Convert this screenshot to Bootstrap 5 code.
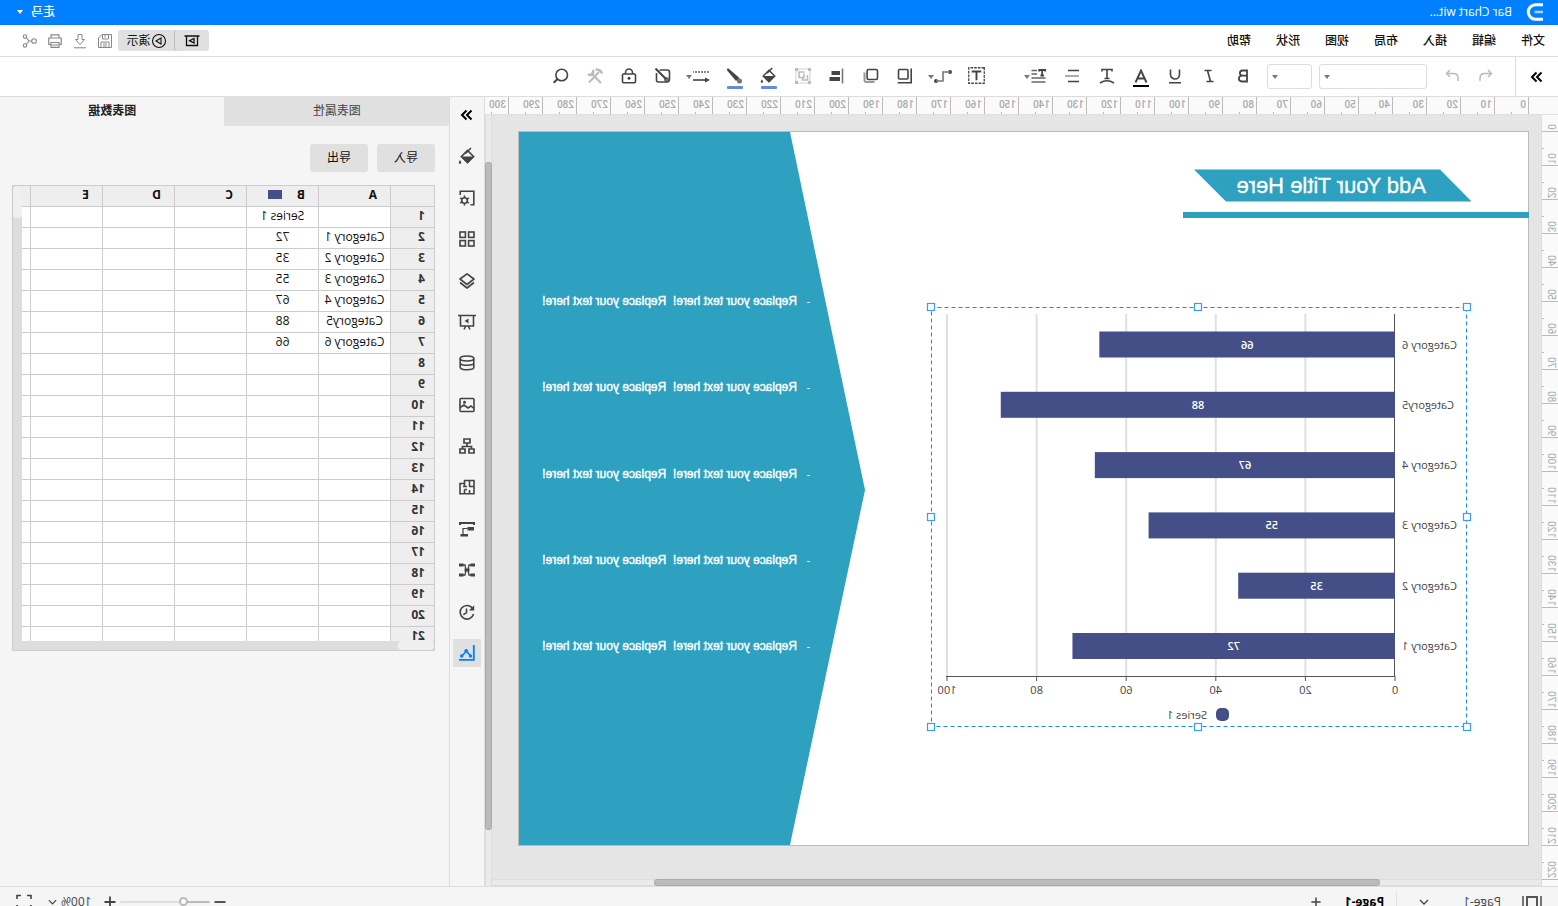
<!DOCTYPE html>
<html lang="zh-CN">
<head>
<meta charset="utf-8">
<meta name="viewport" content="width=device-width, initial-scale=1">
<title>Bar Chart with Text</title>
<link href="https://cdn.jsdelivr.net/npm/bootstrap@5.3.0/dist/css/bootstrap.min.css" rel="stylesheet">
<style>
body{font-family:"Open Sans","Noto Sans CJK SC",sans-serif;font-size:12px;line-height:18px;color:#222;overflow:hidden}
/* whole interface is flipped left to right */
.app-flip{transform:scaleX(-1);height:100vh;background:#fff}
svg{display:block;fill:none;stroke:currentColor;stroke-width:1.6}
.f{fill:currentColor;stroke:none}
.app-flip .btn{--bs-btn-font-size:12px;--bs-btn-line-height:18px;--bs-btn-color:#444;--bs-btn-padding-x:0;--bs-btn-padding-y:0;--bs-btn-border-width:0;--bs-btn-border-radius:3px;display:flex;align-items:center;justify-content:center;flex:none}
.titlebar{height:25px;background:#0080ff;color:#fff;padding:0 17px 1px 14px}
.titlebar .gap-logo{gap:14px}
.menubar{height:32px;border-bottom:1px solid #ddd;padding:0 18px 0 13px}
.menubar nav{gap:25px}
.menubar nav a{color:#111;font-weight:500}
.present{background:#e0e0e0;border-radius:3px;height:21px}
.app-flip .present .btn{--bs-btn-color:#111;height:21px;width:57px}
.app-flip .present .split{width:34px;box-shadow:1px 0 #bbb}
.quick .btn{width:25px;--bs-btn-color:#888}
.toolbar{height:40px;border-bottom:1px solid #ddd}
.fold{width:43px;border-right:1px solid #ddd}
.toolbar .tool{width:34px;height:38px;position:relative;padding-bottom:2px}
.toolbar .faded,.strip .faded{color:#bbb}
.tool .tri{position:absolute;left:26px;top:17px}
.tri{width:0;height:0;border:3px solid transparent;border-top:4px solid #777;border-bottom:0}
.app-flip .form-select{height:25px;padding:0 14px 0 6px;font-size:12px;border:1px solid #ddd;border-radius:3px;background:#fff url("data:image/svg+xml,%3Csvg xmlns='http://www.w3.org/2000/svg' width='6' height='4'%3E%3Cpath d='M0 0h6L3 4z' fill='%23777'/%3E%3C/svg%3E") no-repeat right 4px center/6px 4px}
.ink:after{content:"";position:absolute;left:9px;right:9px;top:28px;height:3px;border-radius:1px;background:#628cd4}
.board{background:#e5e5e5}
.rule-h{height:18px;padding-left:29px;background:#fafafa;border-bottom:1px solid #e0e0e0;color:#aaa;font:500 10px/15px Roboto,sans-serif;overflow:hidden}
.rule-h span{flex:none;width:34px;border-left:1px solid #bbb;padding-left:2px;background:linear-gradient(#bbb,#bbb) 16px 100%/1px 2px no-repeat}
.rule-v{width:17px;background:#fafafa;border-right:1px solid #ddd;color:#aaa;font:10px/12px Roboto,sans-serif;overflow:hidden}
.rule-v span{flex:none;height:34px;border-bottom:1px solid #bbb;background:linear-gradient(#bbb,#bbb) 100% 16px/2px 1px no-repeat;display:flex;align-items:end;padding:0 0 1px 1px}
.rule-v span:first-child{height:17px;background:none}
.rule-v i{font-style:normal;writing-mode:vertical-rl;transform:rotate(180deg)}
.sheet-space{padding:16px 0 0 12px;overflow:hidden}
.track-v{width:7px;background:#eaeaea;border:1px solid #ddd;border-width:0 1px;padding-top:47px}
.track-v div{height:668px;margin:0 -1px;background:#bbb;border:1px solid #aaa;border-radius:3px}
.track-h{height:7px;background:#eaeaea;border:1px solid #ddd;border-width:1px 0;padding-left:161px}
.track-h div{width:726px;height:7px;margin-top:-1px;background:#bbb;border:1px solid #aaa;border-radius:3px}
.strip{width:36px;background:#f5f5f5;border:1px solid #ddd;border-width:0 1px}
.strip-in{height:566px;margin-top:4px}
.strip .btn{width:28px;height:28px;border-radius:0}
.app-flip .strip .on{background:#e0e0e0;color:#0080ff}
.side{width:449px;background:#f5f5f5}
.side .tabs .btn{height:29px;flex:1 1 0;background:#e0e0e0;border-radius:0 0 0 3px;padding-bottom:2px}
.app-flip .side .tabs .on{background:#f5f5f5;font-weight:700;color:#222}
.actions{gap:9px;padding:18px 14px 0}
.side .act{width:58px;height:28px;background:#e0e0e0;color:#111}
.gridbox{margin:13px 12px 0 14px;height:466px;border:1px solid #ccc;background:#ddd;display:grid;grid-template:1fr 9px/1fr 9px;overflow:hidden}
.gridview{background:#fff;overflow:hidden;min-height:0;height:455px}
.gridview table{width:476px;table-layout:fixed;border-collapse:collapse;margin:-1px 0 0 -1px}
.gridview th,.gridview td{border:1px solid #ccc;height:21px;padding:0 0 2px;line-height:18px;text-align:center;overflow:hidden;white-space:nowrap;color:#111}
.gridview th{background:#eee;text-align:left;padding-left:13px;font-weight:700}
.gridview tbody th{padding-left:9px;color:#333}
.gridview th b{display:inline-block;width:14px;height:9px;background:#444f88;margin-left:15px}
.knob-v{height:32px;background:#f0f0f0;border-radius:4px}
.knob-h{width:36px;background:#f0f0f0;border-radius:4px}
.statusbar{height:20px;overflow:hidden;background:#f5f5f5;border-top:1px solid #ddd;color:#555}
.status-in{height:30px}
.app-flip .form-range{width:90px;height:12px}
.form-range::-webkit-slider-runnable-track{height:2px;background:linear-gradient(90deg,#bbb 28%,#ddd 28%)}
.form-range::-webkit-slider-thumb{width:9px;height:9px;margin-top:-4px;background:#fff;border:2px solid #bbb}
.slide text{stroke:none;fill:#444;font-size:11px}
.slide .big{font:22px "Liberation Sans",sans-serif;fill:#fff;stroke:#fff;stroke-width:.3}
.slide .line{font:12px "Liberation Sans",sans-serif;fill:#fff;stroke:#fff;stroke-width:.4;white-space:pre}
.slide .dash{font:10px "Liberation Sans",sans-serif;fill:#fff}
.slide .val{fill:#fff;font-weight:600}
</style>
</head>
<body>
<svg class="d-none">
<symbol id="logo" viewBox="0 0 18 18"><path d="M1 1.800h7.500a7.200 7.200 0 0 1 0 14.400H1" stroke-width="3"/><path d="M1 9h8.500" stroke-width="2.600" opacity=".65"/></symbol>
<symbol id="dbl" viewBox="0 0 16 16"><path d="M3.500 3.500 8 8l-4.500 4.500M8.500 3.500 13 8l-4.500 4.500" stroke-width="2" /></symbol>
<symbol id="undo" viewBox="0 0 16 16"><path d="M6 2 2.500 5.500 6 9M2.500 5.500H9.500Q14 5.500 14 10v3" stroke-width="1.500"/></symbol>
<symbol id="redo" viewBox="0 0 16 16"><path d="M10 2l3.500 3.500L10 9M13.500 5.500H6.500Q2 5.500 2 10v3" stroke-width="1.500"/></symbol>
<symbol id="bold" viewBox="0 0 16 16"><path d="M4 2.500h4.500a2.600 2.600 0 0 1 0 5.200H4zM4 7.700h5.200a2.900 2.900 0 0 1 0 5.800H4z" stroke-width="1.800"/></symbol>
<symbol id="ital" viewBox="0 0 16 16"><path d="M5.500 2.500h7M3.500 13.500h7M9.500 2.500l-3 11"/></symbol>
<symbol id="under" viewBox="0 0 16 16"><path d="M3.500 1.500v5a4.500 4.500 0 0 0 9 0v-5M2 14.800h12"/></symbol>
<symbol id="fcol" viewBox="0 0 18 18"><path d="M3.500 13.500 9 1.500l5.500 12M5.500 9.500h7" stroke-width="1.900"/><path d="M1 17h16" stroke="#000" stroke-width="2"/></symbol>
<symbol id="tarc" viewBox="0 0 16 16"><path d="M3 3.500v-2h10v2M8 1.500v8.500M5.500 10.500h5M1 15q7-4.500 14 0"/></symbol>
<symbol id="align" viewBox="0 0 16 16"><path d="M2 2.500h11M2 13.500h11"/><path d="M2 8h14" stroke="#999"/></symbol>
<symbol id="tlines" viewBox="0 0 16 16"><path d="M1.800 3.500V2h6v1.500M4.800 2v5.500M3 7.500h3.600" stroke-width="1.800"/><path d="M10 2.500h5.500M10 6h5.500M1.500 10h14M1.500 14h14" stroke-width="1.500" stroke="#666"/></symbol>
<symbol id="tbox" viewBox="0 0 16 16"><rect x=".7" y=".7" width="14.600" height="14.600" stroke-dasharray="2.500 1" stroke-width="1.200"/><path d="M3.500 4.200h9M8 4.200v8.300" stroke-width="1.800"/></symbol>
<symbol id="conn" viewBox="0 0 18 16"><circle class="f" cx="2" cy="4" r="2"/><circle class="f" cx="16" cy="13" r="2"/><path d="M2 4h7v9h7" stroke="#777"/></symbol>
<symbol id="bring" viewBox="0 0 16 16"><rect x="5" y="1.500" width="9.500" height="9.500" rx="1"/><path d="M1.800.5v14.300h13.500"/></symbol>
<symbol id="copy" viewBox="0 0 16 16"><path d="M4.500 14h8q2 0 2-2V4.500" stroke="#999" stroke-width="2"/><rect x="1.500" y="1.500" width="10.400" height="10" rx="1.500"/></symbol>
<symbol id="alr" viewBox="0 0 16 16"><path d="M2.500.5v15" stroke="#777"/><path class="f" d="M5 3h8.500v4H5zM5 9h10.500v4H5z"/></symbol>
<symbol id="group" viewBox="0 0 16 16"><rect x="1" y="1" width="14" height="14" stroke-width=".7"/><path d="M7 5.500V9.500H12V4H6.500M3.500 7v5h5v-2" /><path class="f" d="M0 0h3v3H0zM13 0h3v3h-3zM0 13h3v3H0zM13 13h3v3h-3z"/></symbol>
<symbol id="bucket" viewBox="0 0 18 18"><path d="M2.500 9.500 8.500 3.500l6 6-6 6zM5 1l5.500 5.500" /><path class="f" d="M1.500 9.500h14L8.500 16.500zM16 13q2.500 3.500 0 3.800t0-3.800"/></symbol>
<symbol id="brush" viewBox="0 0 16 16"><path class="f" d="M15.800.5 14.500.5 3.500 10l3.500 3L15.800 2.500z"/><circle class="f" cx="3.500" cy="13" r="2.500" opacity=".75"/></symbol>
<symbol id="lstyle" viewBox="0 0 18 16"><path d="M1 4h16" stroke-dasharray="2 1" stroke="#666"/><path d="M2 12h15"/><path class="f" d="M0 12 5 9.500v5z"/></symbol>
<symbol id="nofill" viewBox="0 0 16 16"><path d="M11.500 2H3.500Q1.500 2 1.500 4v7Q1.500 14 4 14h8.500q2 0 2-2V5"/><path d="M15.500.5 5 11" stroke-width="2"/><circle cx="4.500" cy="11.500" r="2.500" class="f" opacity=".75"/></symbol>
<symbol id="lock" viewBox="0 0 16 16"><rect x="1.500" y="6" width="13" height="8.800" rx="1"/><path d="M4.500 6V4.500a3.500 3.500 0 0 1 7 0V6"/><circle class="f" cx="8" cy="10.300" r="1.500"/></symbol>
<symbol id="tools" viewBox="0 0 16 16"><path d="M2 15 12 5M14 14.500 4 4" stroke-width="2"/><path d="M10.500 2a3 3 0 0 0 4.500 4M1 5.500q1-4 6.500-4" stroke-width="2.500"/></symbol>
<symbol id="search" viewBox="0 0 16 16"><circle cx="7.300" cy="7" r="5.800"/><path d="m11.500 11 3.800 3.800" stroke-width="2"/></symbol>
<symbol id="pplay" viewBox="0 0 16 16"><path d="M.5 3h15M2.500 3v9.500h11V3M6 5.500v4.500L10.500 7.700z" stroke-width="1.300"/></symbol>
<symbol id="cplay" viewBox="0 0 16 16"><circle cx="8" cy="8" r="6.500" stroke-width="1.100"/><path d="M6 5v6l5-3z" stroke-width="1.100"/></symbol>
<symbol id="save" viewBox="0 0 16 16"><path d="M1.500 14.500v-13h9.500l3.500 3.500v9.500zM4.500 1.500V6h6V1.500M8 2v2.500M4 14.500V9h8v5.500M6 11h4M6 13h4" stroke-width="1"/></symbol>
<symbol id="down" viewBox="0 0 16 16"><path d="M6 1.500h4v5h2.500L8 11.500 3.500 6.500H6zM2 14.800h12" stroke-width="1"/></symbol>
<symbol id="print" viewBox="0 0 16 16"><path d="M4 5V1.800h8V5M4 11.500H1.800V5h12.400v6.500H12M4 9.500h8v4.800H4zM5 12h6" stroke-width="1.200"/></symbol>
<symbol id="share" viewBox="0 0 16 16"><circle cx="4" cy="8" r="2.300" stroke-width="1.100"/><circle cx="13" cy="3.500" r="1.700" stroke-width="1.100"/><circle cx="13" cy="12.500" r="1.700" stroke-width="1.100"/><path d="M6.300 8H9l2.700-3.500M9 8l2.700 3.500" stroke-width="1.100"/></symbol>
<symbol id="theme" viewBox="0 0 16 16"><path d="M4.500 14.800H1.200V1.200h13.600V5"/><circle cx="10.500" cy="10.500" r="2.800"/><path d="M10.500 5.500v2.200M10.500 13.300v2.200M6.200 8l1.900 1.100M12.900 11.900l1.900 1.100M6.200 13l1.900-1.100M12.900 9.100 14.800 8"/></symbol>
<symbol id="four" viewBox="0 0 16 16"><rect x="1" y="1" width="5.400" height="5.400"/><rect x="9.600" y="1" width="5.400" height="5.400"/><rect x="1" y="9.600" width="5.400" height="5.400"/><rect x="9.600" y="9.600" width="5.400" height="5.400"/></symbol>
<symbol id="layers" viewBox="0 0 16 16"><path d="M8 .8 15 6 8 11.500 1 6zM1 9.500l7 5.500 7-5.500" stroke-linejoin="round"/></symbol>
<symbol id="board" viewBox="0 0 18 16"><path d="M0 1.500h18M2.500 1.500V12h13V1.500M6 15.500l1.500-3M12 15.500 10.500 12.500"/><path class="f" d="M7.500 4.500v5l4-2.500z"/></symbol>
<symbol id="db" viewBox="0 0 16 16"><ellipse cx="8" cy="3.500" rx="6.800" ry="2.500"/><path d="M1.200 3.500v9c0 3 13.600 3 13.600 0v-9M1.200 8c0 3 13.600 3 13.600 0"/></symbol>
<symbol id="pic" viewBox="0 0 16 16"><rect x="1" y="1.500" width="14" height="13" rx="1"/><path d="M1 11.500l3-2.500 3 2L11 8l4 2.500" /><circle class="f" cx="10.500" cy="5.300" r="1.500"/></symbol>
<symbol id="org" viewBox="0 0 16 16"><path d="M5 1h6v4H5zM1 11h5v4H1zM10 11h5v4h-5zM8 5v3M3.500 11V8.500h9V11" stroke-width="1.700"/></symbol>
<symbol id="plan" viewBox="0 0 16 16"><path d="M1 14.800V1.500h9.500V4.500H15v10.300zM1 7.500h5M5.500 1.500V7.500M10.500 4.500V7M5.500 14.800V11M10.500 14.800V10.500M8 10.500h2.500M8 7.500h4" /></symbol>
<symbol id="gantt" viewBox="0 0 16 16"><path d="M0 2h16M1 2v2M15 2v2" stroke-width="2"/><path class="f" d="M1 6h6.500v3.500H1zM7 13h7.500v2.500H7z"/><path d="M7.500 7.500H12V13" stroke-width="1.200"/></symbol>
<symbol id="mind" viewBox="0 0 16 16"><path class="f" d="M0 1.500h4.500v3H0zM11.500 1.500H16v3h-4.500zM0 11.500h4.500v3H0zM11.500 11.500H16v3h-4.500zM5.500 6.500h5v3h-5z"/><path d="M4 3h2l1 5-1 5H4M12 3h-2L9 8l1 5h2" stroke-width="1.300"/></symbol>
<symbol id="hist" viewBox="0 0 16 16"><path d="M2.500 4.200A6.800 6.800 0 1 1 1.400 10M8.500 4.500v4.300l3.200 1.800"/><path class="f" d="M.8 1.200v5.300h5.300z"/></symbol>
<symbol id="chart" viewBox="0 0 16 16"><path d="M1.200 0v14.800H16" stroke-width="1.800"/><path d="M4.500 11 8.500 6l4.500 5"/><circle class="f" cx="4.500" cy="11" r="1.700"/><circle class="f" cx="8.800" cy="5.800" r="1.900"/><circle class="f" cx="13.300" cy="11" r="1.700"/></symbol>
<symbol id="pages" viewBox="0 0 20 14"><rect x="5" y="2" width="10" height="10" stroke-width="2"/><path d="M1 1v12M19 1v12"/></symbol>
<symbol id="chev" viewBox="0 0 10 6"><path d="m1 1 4 4 4-4" stroke-width="1.300"/></symbol>
<symbol id="plus" viewBox="0 0 12 12"><path d="M6 .5v11M.5 6h11" stroke-width="1.800"/></symbol>
<symbol id="minus" viewBox="0 0 12 12"><path d="M.5 6h11" stroke-width="1.800"/></symbol>
<symbol id="full" viewBox="0 0 16 16"><path d="M1 5V1.500h4M11 1.500h4V5M15 11v3.500h-4M5 14.500H1V11"/></symbol>
</svg>

<div class="app-flip d-flex flex-column">
<header class="titlebar d-flex align-items-center justify-content-between flex-shrink-0">
  <div class="gap-logo d-flex align-items-center"><svg width="18" height="18"><use href="#logo"/></svg><span>Bar Chart wit...</span></div>
  <div class="d-flex align-items-center gap-2"><span class="fw-medium">走马</span><span class="tri" style="border-top-color:#fff"></span></div>
</header>

<div class="menubar d-flex align-items-center justify-content-between flex-shrink-0">
  <nav class="d-flex text-nowrap">
    <a class="text-decoration-none" href="#">文件</a><a class="text-decoration-none" href="#">编辑</a><a class="text-decoration-none" href="#">插入</a><a class="text-decoration-none" href="#">布局</a><a class="text-decoration-none" href="#">视图</a><a class="text-decoration-none" href="#">形状</a><a class="text-decoration-none" href="#">帮助</a>
  </nav>
  <div class="quick d-flex align-items-center">
    <div class="present d-flex"><button class="btn split" aria-label="Present page"><svg width="16" height="16"><use href="#pplay"/></svg></button><button class="btn"><svg width="16" height="16"><use href="#cplay"/></svg>演示</button></div>
    <button class="btn" aria-label="Save"><svg width="16" height="16"><use href="#save"/></svg></button>
    <button class="btn" aria-label="Download"><svg width="16" height="16"><use href="#down"/></svg></button>
    <button class="btn" aria-label="Print"><svg width="16" height="16"><use href="#print"/></svg></button>
    <button class="btn" aria-label="Share"><svg width="16" height="16"><use href="#share"/></svg></button>
  </div>
</div>

<div class="toolbar d-flex align-items-center flex-shrink-0">
  <div class="fold h-100 d-flex"><button class="btn w-100 text-black" aria-label="Expand"><svg width="16" height="16"><use href="#dbl"/></svg></button></div>
  <div class="d-flex ps-2 ms-1"><button class="btn tool faded" aria-label="Undo"><svg width="16" height="16"><use href="#undo"/></svg></button><button class="btn tool faded" aria-label="Redo"><svg width="16" height="16"><use href="#redo"/></svg></button></div>
  <select class="form-select flex-shrink-0 ms-2" style="width:108px" aria-label="Font"><option></option></select>
  <select class="form-select flex-shrink-0" style="width:45px;margin:0 7px" aria-label="Font size"><option></option></select>
  <div class="d-flex">
    <button class="btn tool" aria-label="Bold"><svg width="16" height="16"><use href="#bold"/></svg></button>
    <button class="btn tool" aria-label="Italic"><svg width="16" height="16"><use href="#ital"/></svg></button>
    <button class="btn tool" aria-label="Underline"><svg width="16" height="16"><use href="#under"/></svg></button>
    <button class="btn tool" aria-label="Font colour"><svg width="18" height="18" class="mt-1"><use href="#fcol"/></svg></button>
    <button class="btn tool" aria-label="Text arc"><svg width="16" height="16"><use href="#tarc"/></svg></button>
    <button class="btn tool" aria-label="Align"><svg width="16" height="16"><use href="#align"/></svg></button>
    <button class="btn tool me-4" aria-label="Line spacing"><svg width="16" height="16"><use href="#tlines"/></svg><span class="tri"></span></button>
    <button class="btn tool ms-1" aria-label="Text box"><svg width="17" height="17"><use href="#tbox"/></svg></button>
    <button class="btn tool" aria-label="Connector"><svg width="18" height="16"><use href="#conn"/></svg><span class="tri"></span></button>
    <button class="btn tool ms-1" aria-label="Order"><svg width="16" height="16"><use href="#bring"/></svg></button>
    <button class="btn tool" aria-label="Copy"><svg width="16" height="16"><use href="#copy"/></svg></button>
    <button class="btn tool" aria-label="Align shapes"><svg width="16" height="16"><use href="#alr"/></svg></button>
    <button class="btn tool faded" aria-label="Group"><svg width="16" height="16"><use href="#group"/></svg></button>
    <button class="btn tool ink" aria-label="Fill"><svg width="17" height="17"><use href="#bucket"/></svg></button>
    <button class="btn tool ink" aria-label="Line colour"><svg width="16" height="16"><use href="#brush"/></svg></button>
    <button class="btn tool me-1" aria-label="Line style"><svg width="18" height="16"><use href="#lstyle"/></svg><span class="tri"></span></button>
    <button class="btn tool" aria-label="No fill"><svg width="16" height="16"><use href="#nofill"/></svg></button>
    <button class="btn tool" aria-label="Lock"><svg width="16" height="16"><use href="#lock"/></svg></button>
    <button class="btn tool faded" aria-label="Tools"><svg width="16" height="16"><use href="#tools"/></svg></button>
    <button class="btn tool" aria-label="Search"><svg width="16" height="16"><use href="#search"/></svg></button>
  </div>
</div>

<main class="d-flex flex-grow-1" style="min-height:0">
  <section class="board d-flex flex-column flex-grow-1" style="min-width:0">
    <div class="rule-h d-flex flex-shrink-0" id="ruleH"></div>
    <div class="d-flex flex-grow-1" style="min-height:0">
      <div class="rule-v d-flex flex-column flex-shrink-0" id="ruleV"></div>
      <div class="d-flex flex-column flex-grow-1" style="min-width:0">
        <div class="sheet-space flex-grow-1" style="min-height:0">
          <svg class="slide" id="slide" width="1011" height="715" viewBox="0 0 1011 715">
            <rect x=".5" y=".5" width="1010" height="714" fill="#fff" stroke="#bbb" stroke-width="1"/>
            <path class="f" d="M739 1h271v713H739L664 359z" style="fill:#2da1bf"/>
            <path class="f" d="M89 38.500h246L303 70.500H57.500zM0 81h346v6H0z" style="fill:#2da1bf"/>
            <text class="big" x="103" y="62">Add Your Title Here</text>
          </svg>
        </div>
        <div class="track-h flex-shrink-0"><div></div></div>
      </div>
      <div class="track-v flex-shrink-0"><div></div></div>
    </div>
  </section>

  <aside class="strip flex-shrink-0">
    <div class="strip-in d-flex flex-column align-items-center justify-content-between">
      <button class="btn text-black" aria-label="Collapse"><svg width="16" height="16"><use href="#dbl"/></svg></button>
      <button class="btn" aria-label="Fill"><svg width="18" height="18"><use href="#bucket"/></svg></button>
      <button class="btn" aria-label="Theme"><svg width="16" height="16"><use href="#theme"/></svg></button>
      <button class="btn" aria-label="Symbols"><svg width="16" height="16"><use href="#four"/></svg></button>
      <button class="btn" aria-label="Layers"><svg width="16" height="16"><use href="#layers"/></svg></button>
      <button class="btn" aria-label="Slides"><svg width="18" height="16"><use href="#board"/></svg></button>
      <button class="btn" aria-label="Data"><svg width="16" height="16"><use href="#db"/></svg></button>
      <button class="btn" aria-label="Picture"><svg width="16" height="16"><use href="#pic"/></svg></button>
      <button class="btn" aria-label="Organisation"><svg width="16" height="16"><use href="#org"/></svg></button>
      <button class="btn" aria-label="Floor plan"><svg width="16" height="16"><use href="#plan"/></svg></button>
      <button class="btn" aria-label="Gantt"><svg width="16" height="16"><use href="#gantt"/></svg></button>
      <button class="btn" aria-label="Mind map"><svg width="16" height="16"><use href="#mind"/></svg></button>
      <button class="btn" aria-label="History"><svg width="16" height="16"><use href="#hist"/></svg></button>
      <button class="btn on" aria-label="Chart"><svg width="16" height="16"><use href="#chart"/></svg></button>
    </div>
  </aside>

  <aside class="side flex-shrink-0">
    <div class="tabs d-flex"><button class="btn">图表属性</button><button class="btn on">图表数据</button></div>
    <div class="actions d-flex"><button class="btn act">导入</button><button class="btn act">导出</button></div>
    <div class="gridbox">
      <div class="gridview"><table>
        <colgroup><col style="width:44px"><col span="6" style="width:72px"></colgroup>
        <thead><tr><th></th><th>A</th><th>B<b></b></th><th>C</th><th>D</th><th>E</th><th></th></tr></thead>
        <tbody id="cells"></tbody>
      </table></div>
      <div><div class="knob-v"></div></div>
      <div class="d-flex"><div class="knob-h"></div></div><div></div>
    </div>
  </aside>
</main>

<footer class="statusbar flex-shrink-0">
  <div class="status-in d-flex align-items-center justify-content-between">
    <div class="d-flex align-items-center ps-3">
      <svg width="20" height="14"><use href="#pages"/></svg>
      <button class="btn" style="padding:0 22px 0 21px;gap:34px">Page-1 <svg width="10" height="6"><use href="#chev"/></svg></button>
      <span class="border-start" style="height:20px"></span>
      <a class="text-decoration-none text-black fw-bold ps-2 ms-1" href="#">Page-1</a>
      <button class="btn ms-4" aria-label="Add page"><svg width="10" height="10"><use href="#plus"/></svg></button>
    </div>
    <div class="d-flex align-items-center pe-3">
      <button class="btn" aria-label="Zoom out"><svg width="12" height="12"><use href="#minus"/></svg></button>
      <input type="range" class="form-range mx-1" min="0" max="100" value="26" aria-label="Zoom">
      <button class="btn" aria-label="Zoom in"><svg width="12" height="12"><use href="#plus"/></svg></button>
      <button class="btn gap-1 ps-2 ms-1 pe-3">100% <svg width="9" height="6"><use href="#chev"/></svg></button>
      <button class="btn" aria-label="Full screen"><svg width="16" height="16"><use href="#full"/></svg></button>
    </div>
  </div>
</footer>
</div>

<script>
const byId = id => document.getElementById(id);
let h = '', v = '';
for (let i = 0; i <= 300; i += 10) h += `<span>${i}</span>`;
for (let i = 0; i <= 220; i += 10) v += `<span><i>${i}</i></span>`;
byId('ruleH').innerHTML = h;
byId('ruleV').innerHTML = v;

const data = [['Category 1', 72], ['Category 2', 35], ['Category 3', 55], ['Category 4', 67], ['Category5', 88], ['Category 6', 66]];
let rows = '';
for (let r = 1; r <= 21; r++) {
  const d = r === 1 ? ['', 'Series 1'] : data[r - 2] || ['', ''];
  rows += `<tr><th>${r}</th><td>${d[0]}</td><td>${d[1]}</td><td></td><td></td><td></td><td></td></tr>`;
}
byId('cells').innerHTML = rows;

let s = '';
for (const y of [174, 260, 347, 433, 519])
  s += `<text class="dash" x="719" y="${y}">-</text><text class="line" x="732" y="${y}">Replace your text here!  Replace your text here!</text>`;
// chart: 4.48 px per unit from the value axis at x = 134
const x0 = 134;
for (let k = 1; k <= 5; k++) s += `<path d="M${x0 + k * 89.6} 183v362" stroke="#e0e0e0" stroke-width="2"/>`;
for (let k = 0; k <= 5; k++) s += `<path d="M${x0 + k * 89.6} 545v5" stroke="#555" stroke-width="1"/><text x="${x0 + k * 89.6}" y="563" text-anchor="middle">${k * 20}</text>`;
s += '<path d="M134.500 183v362.500H583" stroke="#555" stroke-width="1"/>';
data.forEach(([name, n], i) => {
  const y = 502 - i * 60.3, w = n * 4.48;
  s += `<rect class="f" x="${x0}" y="${y}" width="${w}" height="26" style="fill:#444f88"/><text class="val" x="${x0 + w / 2}" y="${y + 17}" text-anchor="middle">${n}</text><text x="127" y="${y + 17}" text-anchor="end">${name}</text>`;
});
s += '<rect class="f" x="300" y="577" width="13" height="13" rx="5" style="fill:#444f88"/><text x="322" y="588">Series 1</text>';
s += '<rect x="62.500" y="176.500" width="535" height="419" stroke="#1a88f0" stroke-width="1" stroke-dasharray="4 3"/>';
for (const [x, y] of [[62, 176], [331, 176], [598, 176], [62, 386], [598, 386], [62, 596], [331, 596], [598, 596]])
  s += `<rect x="${x - 3.5}" y="${y - 3.5}" width="7" height="7" fill="#fff" stroke="#3a9bff" stroke-width="1.2"/>`;
byId('slide').insertAdjacentHTML('beforeend', s);
</script>
<script src="https://cdn.jsdelivr.net/npm/bootstrap@5.3.0/dist/js/bootstrap.bundle.min.js"></script>
</body>
</html>
